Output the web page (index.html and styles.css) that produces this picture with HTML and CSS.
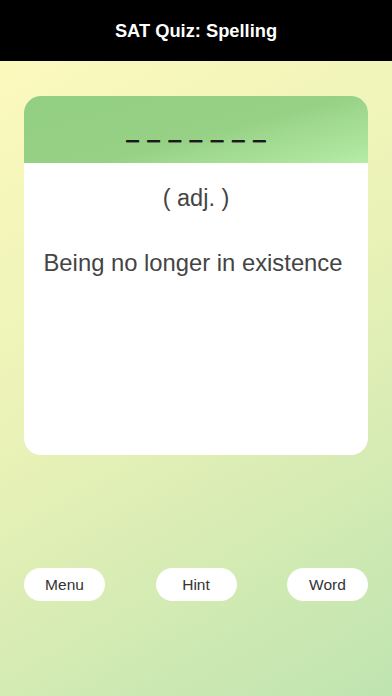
FILE: index.html
```html
<!DOCTYPE html>
<html>
<head>
<meta charset="utf-8">
<link rel="stylesheet" href="styles.css">
</head>
<body>
<header class="topbar"><h1 class="title">SAT Quiz: Spelling</h1></header>
<main class="screen">
  <section class="card">
    <div class="card-head"><span class="blanks">_ _ _ _ _ _ _</span></div>
    <div class="card-body">
      <p class="pos">( adj. )</p>
      <p class="definition">Being no longer in existence</p>
    </div>
  </section>
  <nav class="actions">
    <button class="pill">Menu</button>
    <button class="pill">Hint</button>
    <button class="pill">Word</button>
  </nav>
</main>
</body>
</html>
```
FILE: styles.css
```css
html, body {
  margin: 0;
  padding: 0;
  height: 100%;
}
body {
  font-family: "Liberation Sans", Arial, sans-serif;
  display: flex;
  flex-direction: column;
  background: #000;
}
.topbar {
  height: 61px;
  background: #000;
  display: flex;
  align-items: center;
  justify-content: center;
  flex: none;
}
.title {
  margin: 0;
  color: #fff;
  font-size: 18.3px;
  font-weight: bold;
  padding-top: 1px;
}
.screen {
  flex: 1;
  background: linear-gradient(150deg, #fcf9bd 0%, #eaf2b7 45%, #bfe4b0 100%);
  padding: 35px 24px 0;
  display: flex;
  flex-direction: column;
}
.card {
  height: 359px;
  border-radius: 17px;
  overflow: hidden;
  background: #fff;
  display: flex;
  flex-direction: column;
}
.card-head {
  height: 67px;
  background: linear-gradient(165deg, #93cf83 0%, #97d186 55%, #b6eca6 100%);
  display: flex;
  align-items: flex-end;
  justify-content: center;
  flex: none;
}
.blanks {
  font-size: 22px;
  letter-spacing: 1.4px;
  color: #1a1a1a;
  line-height: 1;
  padding-bottom: 22px;
  padding-left: 1.4px;
  white-space: pre;
  text-shadow: 0 1px 0 #1a1a1a, 0 0.5px 0 #1a1a1a;
}
.card-body {
  flex: 1;
  display: flex;
  flex-direction: column;
  align-items: center;
}
.pos {
  margin: 21px 0 0;
  font-size: 23.5px;
  line-height: 28px;
  color: #444;
}
.definition {
  margin: 37px 6px 0 0;
  font-size: 23.8px;
  line-height: 28px;
  color: #444;
}
.actions {
  margin-top: 113px;
  display: flex;
  justify-content: space-between;
}
.pill {
  width: 81px;
  height: 33px;
  border: none;
  border-radius: 17px;
  background: #fff;
  font-family: "Liberation Sans", Arial, sans-serif;
  font-size: 15.5px;
  color: #333;
  padding: 0;
}
```
